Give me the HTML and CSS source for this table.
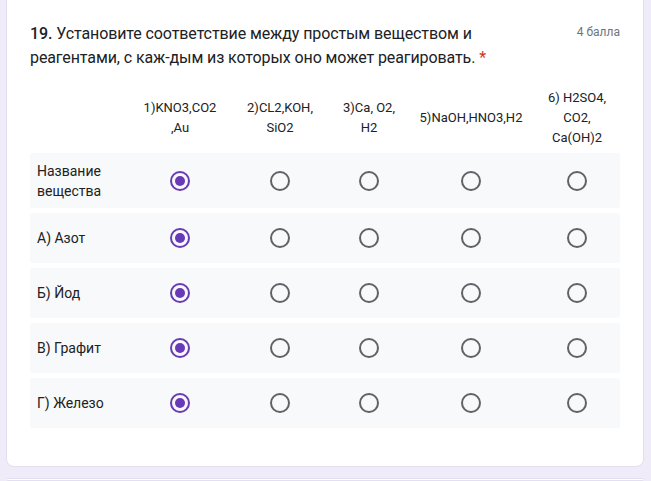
FILE: index.html
```html
<!DOCTYPE html>
<html lang="ru">
<head>
<meta charset="utf-8">
<link rel="stylesheet" href="styles.css">
</head>
<body>
<div class="card">
  <div class="head">
    <div class="title"><b class="num">19.</b> Установите соответствие между простым веществом и реагентами, с каж-дым из которых оно может реагировать. <span class="req">*</span></div>
    <div class="points">4 балла</div>
  </div>
  <div class="grid">
    <div class="hrow">
      <div class="hcell"></div>
      <div class="hcell">1)KNO3,CO2 ,Au</div>
      <div class="hcell">2)CL2,KOH, SiO2</div>
      <div class="hcell">3)Ca, O2, H2</div>
      <div class="hcell">5)NaOH,HNO3,H2</div>
      <div class="hcell">6) H2SO4, CO2, Ca(OH)2</div>
    </div>
    <div class="row">
      <div class="label">Название вещества</div>
      <div class="cell"><span class="radio on"></span></div>
      <div class="cell"><span class="radio"></span></div>
      <div class="cell"><span class="radio"></span></div>
      <div class="cell"><span class="radio"></span></div>
      <div class="cell"><span class="radio"></span></div>
    </div>
    <div class="row">
      <div class="label">А) Азот</div>
      <div class="cell"><span class="radio on"></span></div>
      <div class="cell"><span class="radio"></span></div>
      <div class="cell"><span class="radio"></span></div>
      <div class="cell"><span class="radio"></span></div>
      <div class="cell"><span class="radio"></span></div>
    </div>
    <div class="row">
      <div class="label">Б) Йод</div>
      <div class="cell"><span class="radio on"></span></div>
      <div class="cell"><span class="radio"></span></div>
      <div class="cell"><span class="radio"></span></div>
      <div class="cell"><span class="radio"></span></div>
      <div class="cell"><span class="radio"></span></div>
    </div>
    <div class="row">
      <div class="label">В) Графит</div>
      <div class="cell"><span class="radio on"></span></div>
      <div class="cell"><span class="radio"></span></div>
      <div class="cell"><span class="radio"></span></div>
      <div class="cell"><span class="radio"></span></div>
      <div class="cell"><span class="radio"></span></div>
    </div>
    <div class="row">
      <div class="label">Г) Железо</div>
      <div class="cell"><span class="radio on"></span></div>
      <div class="cell"><span class="radio"></span></div>
      <div class="cell"><span class="radio"></span></div>
      <div class="cell"><span class="radio"></span></div>
      <div class="cell"><span class="radio"></span></div>
    </div>
  </div>
</div>
<div class="card next"></div>
</body>
</html>
```

FILE: styles.css
```css
html, body {
  margin: 0;
  padding: 0;
  background: #f0ebf8;
  font-family: Roboto, "Noto Sans", sans-serif;
  color: #202124;
  overflow: hidden;
}
body {
  height: 481px;
}
.card {
  margin: -8px 7px 0 6px;
  background: #fff;
  border: 1px solid #e3dff0;
  border-radius: 8px;
  padding: 29px 23px 38px 23px;
}
.card.next {
  margin-top: 11px;
  height: 1px;
  padding: 0;
}
.head {
  display: flex;
  align-items: flex-start;
}
.title {
  width: 505px;
  font-size: 16px;
  line-height: 24px;
  letter-spacing: -0.1px;
}
.num {
  font-weight: 500;
}
.req {
  color: #d93025;
}
.points {
  margin-left: auto;
  padding-top: 3px;
  font-size: 12px;
  color: #70757a;
}
.grid {
  margin-top: 16px;
  display: flex;
  flex-direction: column;
  gap: 5px;
}
.hrow, .row {
  display: grid;
  grid-template-columns: 100px 100px 100px 78px 126px 86px;
}
.hrow {
  height: 64px;
  margin-bottom: -2px;
}
.hcell {
  display: flex;
  align-items: center;
  justify-content: center;
  text-align: center;
  font-size: 13px;
  line-height: 20px;
  padding: 0 6px;
}
.row {
  background: #f8f9fa;
  border-radius: 2px;
  height: 50px;
}
.row:nth-child(2) {
  height: 55px;
}
.label {
  display: flex;
  align-items: center;
  padding-left: 7px;
  font-size: 14px;
  line-height: 20px;
}
.cell {
  display: flex;
  align-items: center;
  justify-content: center;
}
.radio {
  width: 16px;
  height: 16px;
  border: 2px solid #5f6368;
  border-radius: 50%;
  display: flex;
  align-items: center;
  justify-content: center;
}
.radio.on {
  border-color: #673ab7;
}
.radio.on::after {
  content: "";
  width: 10px;
  height: 10px;
  border-radius: 50%;
  background: #673ab7;
}
```
